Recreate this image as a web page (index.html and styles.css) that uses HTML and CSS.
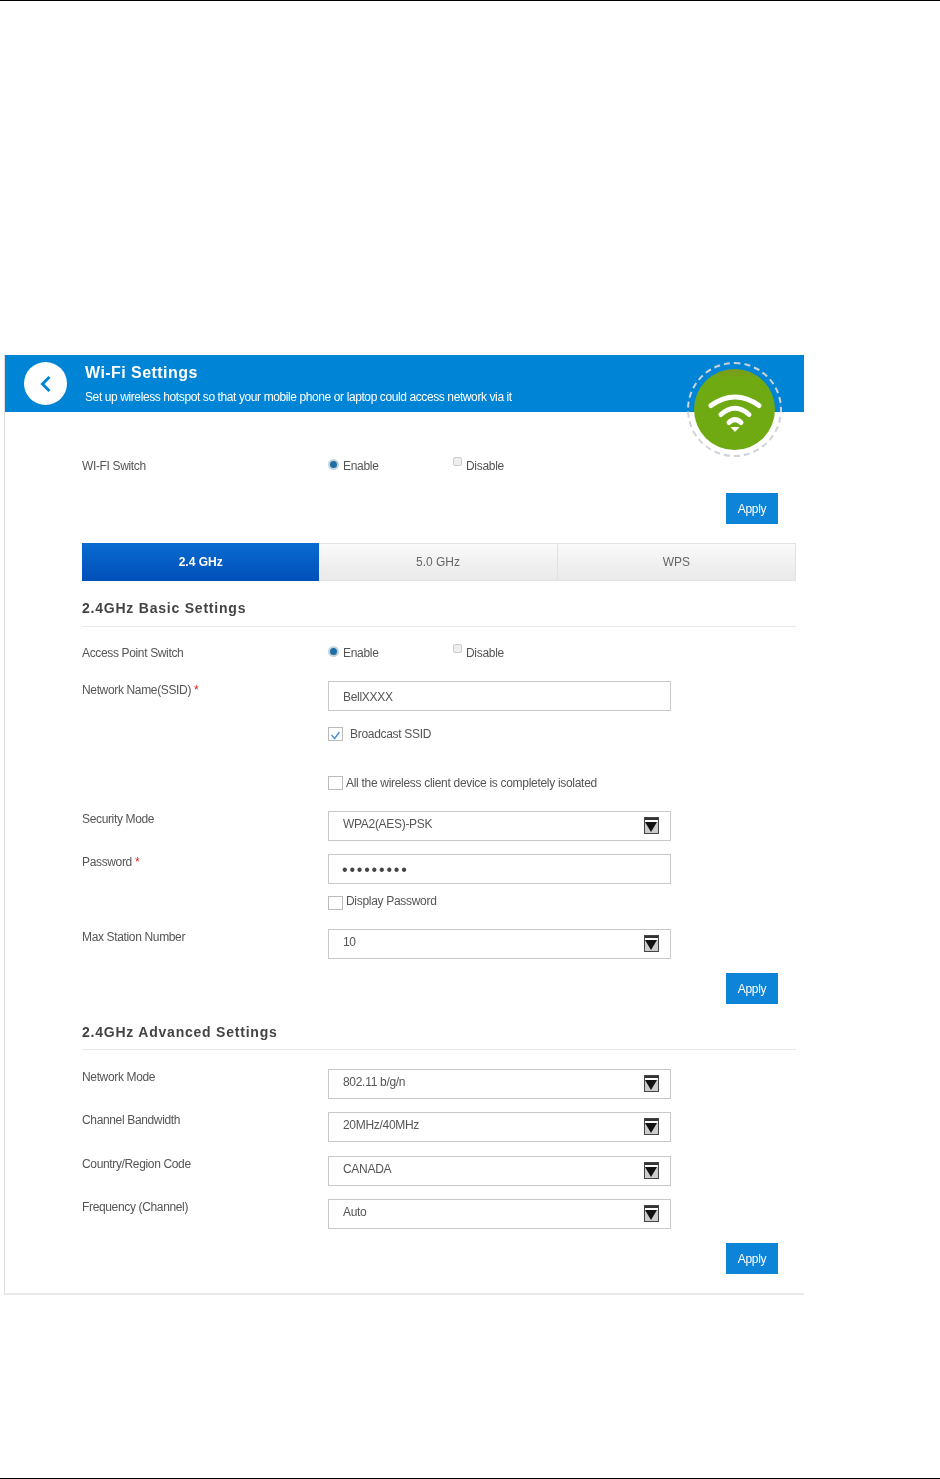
FILE: index.html
```html
<!DOCTYPE html>
<html lang="en">

<head>
   <meta charset="UTF-8">
   <title>Wi-Fi Settings</title>
   <link rel="stylesheet" href="styles.css">
</head>

<body>
   <div class="page">
      <div class="panel">
         <!-- Blue header -->
         <div class="header">
            <div class="back">
               <svg width="16" height="20" viewBox="0 0 16 20"><path d="M11.5 3 L4.5 10 L11.5 17" fill="none" stroke="#0085d6" stroke-width="3"/></svg>
            </div>
            <div>
               <h1>Wi-Fi Settings</h1>
               <p>Set up wireless hotspot so that your mobile phone or laptop could access network via it</p>
            </div>
         </div>

         <!-- Green wifi badge -->
         <div class="badge">
            <svg width="58" height="46" viewBox="0 0 58 46">
               <g fill="none" stroke="#fff" stroke-width="5" stroke-linecap="round">
                  <path d="M5 18.5 Q29 1.5 53 18.5"/>
                  <path d="M15 27.5 Q29 15 43 27.5"/>
                  <path d="M23 35.5 Q29 29.5 35 35.5"/>
               </g>
               <path d="M24.5 40 h9 l-4.5 5 z" fill="#fff"/>
            </svg>
         </div>

         <div class="content">
            <div class="row switch-row">
               <span class="label">WI-FI Switch</span>
               <span class="radio on"></span><span class="opt">Enable</span>
               <span class="radio off"></span><span class="opt">Disable</span>
            </div>
            <div class="actions first"><button class="apply">Apply</button></div>

            <div class="tabs">
               <div class="tab active">2.4 GHz</div>
               <div class="tab">5.0 GHz</div>
               <div class="tab">WPS</div>
            </div>

            <!-- Basic settings -->
            <h2 class="section basic">2.4GHz Basic Settings</h2>
            <div class="row switch-row ap">
               <span class="label">Access Point Switch</span>
               <span class="radio on"></span><span class="opt">Enable</span>
               <span class="radio off"></span><span class="opt">Disable</span>
            </div>
            <div class="row field ssid">
               <span class="label">Network Name(SSID) <em>*</em></span>
               <div class="box">BellXXXX</div>
            </div>
            <div class="row check broadcast">
               <span class="tick on">
                  <svg width="15" height="15" viewBox="0 0 15 15"><path d="M3 7 L6.5 11 L12 3.5" fill="none" stroke="#4a90d9" stroke-width="1.6"/></svg>
               </span>
               <span class="check-text">Broadcast SSID</span>
            </div>
            <div class="row check isolated">
               <span class="tick"></span>
               <span class="check-text">All the wireless client device is completely isolated</span>
            </div>
            <div class="row field security">
               <span class="label">Security Mode</span>
               <div class="box select">WPA2(AES)-PSK<span class="arrow"></span></div>
            </div>
            <div class="row field password">
               <span class="label">Password <em>*</em></span>
               <div class="box dots">•••••••••</div>
            </div>
            <div class="row check display">
               <span class="tick"></span>
               <span class="check-text">Display Password</span>
            </div>
            <div class="row field station">
               <span class="label">Max Station Number</span>
               <div class="box select">10<span class="arrow"></span></div>
            </div>
            <div class="actions"><button class="apply">Apply</button></div>

            <!-- Advanced settings -->
            <h2 class="section advanced">2.4GHz Advanced Settings</h2>
            <div class="row field mode">
               <span class="label">Network Mode</span>
               <div class="box select">802.11 b/g/n<span class="arrow"></span></div>
            </div>
            <div class="row field tight">
               <span class="label">Channel Bandwidth</span>
               <div class="box select">20MHz/40MHz<span class="arrow"></span></div>
            </div>
            <div class="row field next">
               <span class="label">Country/Region Code</span>
               <div class="box select">CANADA<span class="arrow"></span></div>
            </div>
            <div class="row field tight">
               <span class="label">Frequency (Channel)</span>
               <div class="box select">Auto<span class="arrow"></span></div>
            </div>
            <div class="actions"><button class="apply">Apply</button></div>
         </div>
      </div>
   </div>
</body>

</html>
```

FILE: styles.css
```css
/* Page with the document rules on top and bottom */
body {
   margin: 0;
   background: #ffffff;
   font-family: "Liberation Sans", Arial, sans-serif;
   font-size: 12px;
   color: #555;
}

.page {
   height: 1479px;
   border-top: 1px solid #000;
   border-bottom: 1px solid #000;
   padding: 354px 136px 0 4px;
   box-sizing: border-box;
}

/* Main panel */
.panel {
   position: relative;
   height: 940px;
   box-sizing: border-box;
   border-left: 1px solid #ddd;
   border-bottom: 2px solid #e8e8e8;
   filter: blur(0.45px);
}

/* Header */
.header {
   height: 57px;
   background: #0085d6;
   display: flex;
   align-items: center;
   padding-left: 19px;
   color: #fff;
}

.back {
   width: 43px;
   height: 43px;
   border-radius: 50%;
   background: #fff;
   display: flex;
   align-items: center;
   justify-content: center;
   margin-right: 18px;
}

.header h1 {
   margin: 0 0 8px;
   font-size: 16px;
   line-height: 18px;
   letter-spacing: 0.45px;
}

.header p {
   margin: 0;
   font-size: 12px;
   line-height: 14px;
   letter-spacing: -0.4px;
}

/* Wifi badge hangs over the header */
.badge {
   position: absolute;
   left: 689px;
   top: 14px;
   width: 81px;
   height: 81px;
   border-radius: 50%;
   background: linear-gradient(#7c9a1c, #70aa12 12%);
   display: flex;
   align-items: center;
   justify-content: center;
}

.badge::before {
   content: "";
   position: absolute;
   inset: -7px;
   border: 2px dashed #cfd3da;
   border-radius: 50%;
}

/* Content */
.content {
   padding-left: 77px;
   width: 714px;
}

.row {
   display: flex;
   align-items: flex-start;
}

.label {
   width: 246px;
   flex-shrink: 0;
   line-height: 14px;
   letter-spacing: -0.35px;
}

.label em {
   color: #d22;
   font-style: normal;
}

.switch-row {
   margin-top: 47px;
   height: 14px;
}

.switch-row.ap {
   margin-top: 19px;
}

.radio {
   width: 11px;
   height: 11px;
   border-radius: 50%;
   margin-right: 4px;
   box-sizing: border-box;
}

.radio.on {
   background: #1c6ea4;
   border: 2px solid #c4d4dc;
}

.radio.off {
   width: 9px;
   height: 9px;
   border-radius: 2px;
   background: #eee;
   border: 1px solid #ccc;
   margin-top: -2px;
}

.opt {
   width: 110px;
   line-height: 14px;
   letter-spacing: -0.3px;
}

/* Apply buttons */
.actions {
   display: flex;
   justify-content: flex-end;
   width: 696px;
   margin-top: 14px;
}

.actions.first {
   margin-top: 20px;
}

.apply {
   width: 52px;
   height: 31px;
   border: none;
   padding: 0;
   background: #0d84d8;
   color: #fff;
   font-family: inherit;
   font-size: 12px;
   letter-spacing: -0.3px;
}

/* Tabs */
.tabs {
   display: flex;
   width: 714px;
   height: 38px;
   margin-top: 19px;
}

.tab {
   flex: 1;
   display: flex;
   align-items: center;
   justify-content: center;
   box-sizing: border-box;
   border: 1px solid #e2e2e2;
   border-left: none;
   background: linear-gradient(#fafafa, #e9e9e9);
   color: #666;
}

.tab.active {
   border: none;
   background: linear-gradient(#0a6bd0, #0050b8);
   color: #fff;
   font-weight: bold;
}

/* Section headings */
.section {
   margin: 0;
   width: 714px;
   font-size: 14px;
   line-height: 16px;
   letter-spacing: 0.78px;
   color: #444;
   padding-bottom: 10px;
   border-bottom: 1px solid #e8e8e8;
}

.section.basic {
   margin-top: 19px;
}

.section.advanced {
   margin-top: 20px;
   padding-bottom: 9px;
}

/* Fields */
.box {
   position: relative;
   width: 343px;
   height: 30px;
   box-sizing: border-box;
   border: 1px solid #c8c8c8;
   padding-left: 14px;
   line-height: 30px;
   letter-spacing: -0.3px;
   margin-top: -2px;
}

.select {
   line-height: 24px;
}

.dots {
   font-size: 16px;
   line-height: 30px;
   letter-spacing: 1.8px;
   padding-left: 13px;
   color: #444;
}

/* Dropdown arrow: dark bar, white strip, black triangle */
.arrow {
   position: absolute;
   right: 11px;
   top: 5px;
   width: 15px;
   height: 17px;
   box-sizing: border-box;
   border: 1px solid #444;
   background: linear-gradient(#333 2px, #fff 2px, #fff 4px, #ccc 4px);
}

.arrow::after {
   content: "";
   position: absolute;
   left: 0;
   top: 4px;
   border-left: 6.5px solid transparent;
   border-right: 6.5px solid transparent;
   border-top: 10px solid #111;
}

.field {
   height: 28px;
}

.field .label {
   margin-top: -1px;
}

.ssid { margin-top: 23px; }
.ssid .label { margin-top: 0; }
.security { margin-top: 23px; }
.password { margin-top: 15px; }
.station { margin-top: 21px; }
.mode { margin-top: 21px; }
.next { margin-top: 16px; }
.tight { margin-top: 15px; }

/* Checkboxes */
.check {
   margin-left: 246px;
   align-items: center;
}

.tick {
   width: 15px;
   height: 14px;
   box-sizing: border-box;
   border: 1px solid #bbb;
   margin-right: 3px;
   display: flex;
}

.tick.on {
   margin-right: 7px;
}

.check-text {
   letter-spacing: -0.3px;
}

.broadcast { margin-top: 16px; }
.isolated { margin-top: 35px; }
.display { margin-top: 12px; align-items: flex-start; }
.display .check-text { margin-top: -2px; }
```
